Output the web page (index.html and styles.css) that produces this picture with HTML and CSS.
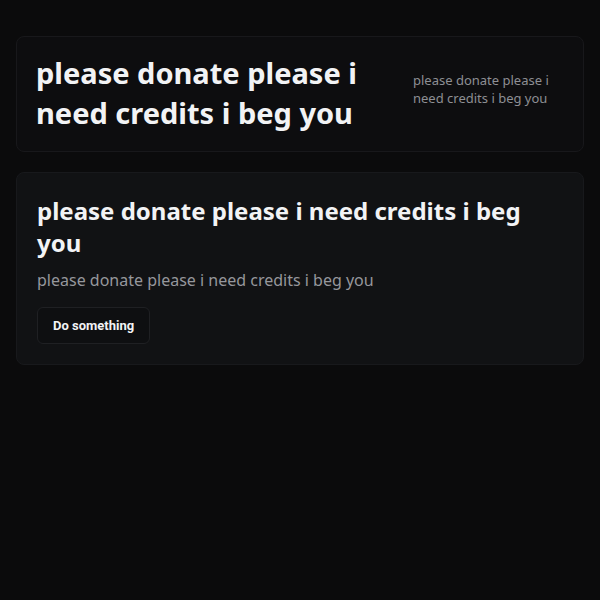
FILE: index.html
```html
<!DOCTYPE html>
<html lang="en">
<head>
  <meta charset="utf-8" />
  <link rel="stylesheet" href="styles.css">
  <title>Please donate</title>
</head>
<body>
  <div class="page">
    <div class="banner">
      <h1 class="banner-title">please donate please i need credits i beg you</h1>
      <p class="banner-note">please donate please i need credits i beg you</p>
    </div>

    <div class="card">
      <h2 class="card-title">please donate please i need credits i beg you</h2>
      <p class="card-text">please donate please i need credits i beg you</p>
      <button class="btn">Do something</button>
    </div>
  </div>
</body>
</html>
```

FILE: styles.css
```css
body {
  margin: 0;
  background: #0b0b0c;
  font-family: "Noto Sans", sans-serif;
  color: #f2f3f5;
}
.page {
  padding: 36px 16px;
  display: flex;
  flex-direction: column;
  gap: 20px;
}
.banner {
  display: flex;
  align-items: center;
  gap: 40px;
  padding: 16px 20px 18px 19px;
  background: #0d0d0f;
  border: 1px solid #18181b;
  border-radius: 8px;
}
.banner-title {
  margin: 0;
  flex: 1;
  font-size: 29px;
  line-height: 40px;
  font-weight: 700;
}
.banner-note {
  margin: 0 0 8px;
  width: 150px;
  font-size: 13px;
  line-height: 18px;
  color: #8e8f94;
}
.card {
  padding: 22px 20px 20px 20px;
  background: #111214;
  border: 1px solid #18191c;
  border-radius: 8px;
}
.card-title {
  margin: 0;
  font-size: 24px;
  line-height: 32px;
  font-weight: 700;
}
.card-text {
  margin: 9px 0 15px;
  font-size: 16px;
  line-height: 24px;
  color: #96979c;
}
.btn {
  padding: 10px 15px;
  background: #0e0f11;
  border: 1px solid #1f2023;
  border-radius: 6px;
  color: #f2f3f5;
  font-family: Roboto, sans-serif;
  font-size: 13px;
  line-height: 15px;
  font-weight: 700;
  cursor: pointer;
}
```
